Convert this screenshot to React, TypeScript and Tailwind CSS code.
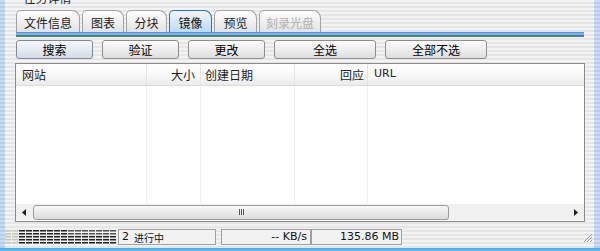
import React from "react";

const stripe =
  "bg-[repeating-linear-gradient(180deg,#f3f3f3_0px,#f3f3f3_2px,#e6e6e6_2px,#e6e6e6_4px)]";

const font = { fontFamily: '"Noto Sans CJK SC", "DejaVu Sans", sans-serif' };

function Tab({ label, active, disabled, w }: { label: string; active?: boolean; disabled?: boolean; w: number }) {
  return (
    <div
      style={{ width: w }}
      className={
        "h-[22px] flex items-center justify-center pt-[2px] rounded-tl-[5px] rounded-tr-[8px] border border-b-0 text-[12px] leading-none " +
        (active
          ? "border-[#3a6fa8] bg-[linear-gradient(180deg,#eef7fe,#b9dbf5)] text-[#111]"
          : "border-[#a3a3a3] bg-[linear-gradient(180deg,#fefefe,#e2e2e2)] ") +
        (disabled ? " text-[#b0b0b0]" : active ? "" : " text-[#222]")
      }
    >
      {label}
    </div>
  );
}

function Btn({ label, w, focus }: { label: string; w: number; focus?: boolean }) {
  return (
    <div
      style={{ width: w }}
      className={
        "h-[19px] flex items-center justify-center rounded-[3px] border text-[12px] leading-none text-black " +
        (focus
          ? "border-[#7f8a96] bg-[linear-gradient(180deg,#f4f8fb,#d3dde7)]"
          : "border-[#8e8e8e] bg-[linear-gradient(180deg,#fdfdfd,#dedede)]")
      }
    >
      {label}
    </div>
  );
}

function Progress() {
  const cols = 16;
  const rects: React.ReactNode[] = [];
  for (let c = 0; c < cols; c++) {
    const light = c < 2;
    for (let r = 0; r < 5; r++) {
      rects.push(
        <rect
          key={c + "-" + r}
          x={c * 7}
          y={2 + r * 3}
          width={6}
          height={1.5}
          fill={light ? "#c8c8b8" : r < 2 && c > 8 ? "#555" : "#222"}
        />
      );
    }
  }
  return (
    <svg width={112} height={18} viewBox="0 0 112 18">
      {rects}
    </svg>
  );
}

export default function App() {
  return (
    <div className="w-[600px] h-[251px] overflow-hidden flex flex-col bg-white" style={font}>
      <div className="flex flex-1 min-h-0">
        <div className="w-[5px] bg-[repeating-linear-gradient(180deg,#c9dcf1_0px,#c9dcf1_2px,#b5cde9_2px,#b5cde9_4px)]" />
        <div className={"flex-1 flex flex-col " + stripe}>
          {/* title */}
          <div className="h-[10px] relative">
            <div className="absolute left-[4px] top-[-11px] flex items-center gap-[6px] text-[12px] text-[#222]">
              <span className="text-[10px]">⌃</span>
              <span>任务详情</span>
            </div>
          </div>
          {/* tabs */}
          <div className="flex items-end gap-[2px] pl-[11px] h-[22px]">
            <Tab label="文件信息" w={64} />
            <Tab label="图表" w={42} />
            <Tab label="分块" w={41} />
            <Tab label="镜像" w={43} active />
            <Tab label="预览" w={43} />
            <Tab label="刻录光盘" w={62} disabled />
          </div>
          <div className="ml-[11px] w-[568px] h-[5px] flex flex-col">
            <div className="h-[1px] bg-[#5a96d6]" />
            <div className="h-[2px] bg-[#79b4ec]" />
            <div className="h-[1px] bg-[#3e7bc0]" />
            <div className="h-[1px] bg-[#6a7a70]" />
          </div>
          {/* buttons */}
          <div className="flex gap-[9px] pl-[11px] mt-[3px]">
            <Btn label="搜索" w={77} focus />
            <Btn label="验证" w={77} />
            <Btn label="更改" w={77} />
            <Btn label="全选" w={102} />
            <Btn label="全部不选" w={102} />
          </div>
          {/* table */}
          <div className="ml-[10px] mt-[4px] w-[570px] h-[159px] border border-[#8a8a8a] bg-white flex flex-col">
            <div className="h-[22px] flex text-[12px] text-[#222] bg-[linear-gradient(180deg,#ffffff,#f6f6f6_60%,#ebebeb)] border-b border-[#dcdcdc]">
              <div className="w-[131px] pl-[6px] flex items-center border-r border-[#e4e4e4]">网站</div>
              <div className="w-[54px] pr-[5px] flex items-center justify-end border-r border-[#e4e4e4]">大小</div>
              <div className="w-[94px] pl-[4px] flex items-center border-r border-[#e4e4e4]">创建日期</div>
              <div className="w-[73px] pr-[3px] flex items-center justify-end border-r border-[#e4e4e4]">回应</div>
              <div className="flex-1 pl-[6px] flex items-center" style={{ fontFamily: '"DejaVu Sans", sans-serif', fontSize: 11 }}>URL</div>
            </div>
            <div className="flex-1 flex">
              <div className="w-[131px] border-r border-[#f0f0f0]" />
              <div className="w-[54px] border-r border-[#f0f0f0]" />
              <div className="w-[94px] border-r border-[#f0f0f0]" />
              <div className="w-[73px] border-r border-[#f0f0f0]" />
              <div className="flex-1" />
            </div>
            {/* scrollbar */}
            <div className="h-[16px] mb-[1px] flex items-center bg-[#f0f0f0]">
              <div className="w-[17px] flex items-center justify-center">
                <svg width="5" height="7" viewBox="0 0 5 7"><path d="M4 0 L0 3.5 L4 7 Z" fill="#222" /></svg>
              </div>
              <div className="w-[416px] h-[15px] rounded-[3px] border border-[#9b9b9b] bg-[linear-gradient(180deg,#f8f8f8,#dcdcdc)] flex items-center justify-center">
                <div className="flex gap-[1px]">
                  <div className="w-[1px] h-[6px] bg-[#555]" />
                  <div className="w-[1px] h-[6px] bg-[#555]" />
                  <div className="w-[1px] h-[6px] bg-[#555]" />
                </div>
              </div>
              <div className="flex-1" />
              <div className="w-[17px] flex items-center justify-center">
                <svg width="5" height="7" viewBox="0 0 5 7"><path d="M1 0 L5 3.5 L1 7 Z" fill="#222" /></svg>
              </div>
            </div>
          </div>
          {/* status bar */}
          <div className="mt-[6px] h-[18px] flex items-center text-[11px] text-[#111]" style={{ fontFamily: '"DejaVu Sans", "Noto Sans CJK SC", sans-serif' }}>
            <div className="w-[113px]"><Progress /></div>
            <div className="w-[98px] h-[16px] border border-[#a0a0a0] bg-[#f2f2f2] flex items-center pl-[3px] gap-[5px]">
              <span>2</span>
              <span style={{ fontFamily: '"Noto Sans CJK SC", sans-serif', fontSize: 10 }}>进行中</span>
            </div>
            <div className="w-[90px] h-[16px] ml-[5px] border border-[#a0a0a0] bg-[#f2f2f2] flex items-center justify-end pr-[3px]">-- KB/s</div>
            <div className="w-[91px] h-[16px] border border-[#a0a0a0] bg-[#f2f2f2] flex items-center justify-end pr-[2px]">135.86 MB</div>
            <div className="flex-1" />
            <svg width="11" height="11" viewBox="0 0 11 11" className="mr-[1px]">
              <path d="M10 2 L2 10 M10 5 L5 10 M10 8 L8 10" stroke="#9a9a9a" strokeWidth="1" />
            </svg>
          </div>
        </div>
        <div className="w-[6px] bg-[repeating-linear-gradient(180deg,#c9dcf1_0px,#c9dcf1_2px,#b5cde9_2px,#b5cde9_4px)]" />
      </div>
      <div className="h-[3px] bg-[linear-gradient(180deg,#3fa9e6,#6cc3f0)]" />
    </div>
  );
}
